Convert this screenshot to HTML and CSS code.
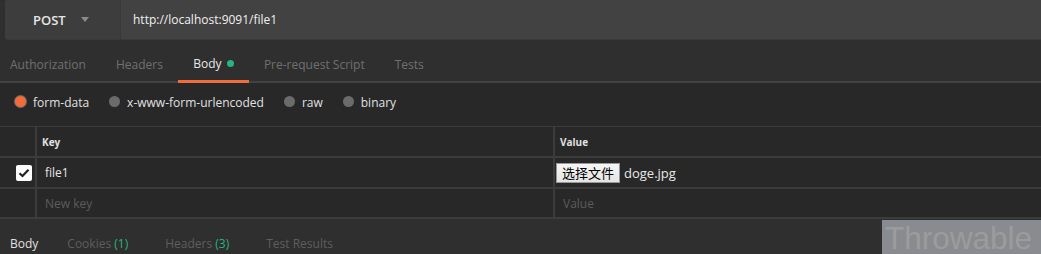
FILE: index.html
```html
<html lang="zh">
<head>
    <meta charset="UTF-8">
    <title>Postman</title>
    <link rel="stylesheet" href="styles.css">
</head>
<body>
    <div class="request-bar">
        <div class="method">POST <span class="caret"></span></div>
        <div class="url">http://localhost:9091/file1</div>
    </div>
    <div class="tabs">
        <span class="tab">Authorization</span>
        <span class="tab">Headers</span>
        <span class="tab active">Body <span class="dot"></span></span>
        <span class="tab">Pre-request Script</span>
        <span class="tab">Tests</span>
    </div>
    <div class="body-panel">
        <div class="radios">
            <label class="radio checked"><span class="circle"></span>form-data</label>
            <label class="radio"><span class="circle"></span>x-www-form-urlencoded</label>
            <label class="radio"><span class="circle"></span>raw</label>
            <label class="radio"><span class="circle"></span>binary</label>
        </div>
        <div class="kv-table">
            <div class="row head">
                <div class="cell check"></div>
                <div class="cell key">Key</div>
                <div class="cell value">Value</div>
            </div>
            <div class="row">
                <div class="cell check">
                    <span class="checkbox">
                        <svg width="12" height="10" viewBox="0 0 12 10"><path d="M1.5 5.2 L4.5 8 L10.5 1.8" fill="none" stroke="#222" stroke-width="2.2"/></svg>
                    </span>
                </div>
                <div class="cell key">file1</div>
                <div class="cell value file"><button class="file-btn" type="button">选择文件</button><span class="file-name">doge.jpg</span></div>
            </div>
            <div class="row">
                <div class="cell check"></div>
                <div class="cell key placeholder">New key</div>
                <div class="cell value placeholder">Value</div>
            </div>
        </div>
    </div>
    <div class="response-tabs">
        <span class="rtab active">Body</span>
        <span class="rtab">Cookies <span class="count">(1)</span></span>
        <span class="rtab">Headers <span class="count">(3)</span></span>
        <span class="rtab">Test Results</span>
    </div>
    <div class="watermark">Throwable</div>
</body>
</html>
```
FILE: styles.css
```css
html {
    height: 254px;
    overflow: hidden;
}
body {
    margin: 0;
    background: #2f2f2f;
    font-family: 'Open Sans', 'Noto Sans', sans-serif;
    font-size: 12px;
    color: #d8d8d8;
    height: 254px;
    overflow: hidden;
    position: relative;
}
.request-bar {
    display: flex;
    height: 39px;
    margin-left: 5px;
    background: #424242;
    border-radius: 3px 0 0 3px;
    border-bottom: 1px solid #3a3a3a;
}
.method {
    width: 116px;
    box-sizing: border-box;
    display: flex;
    align-items: center;
    padding-left: 28px;
    background: #3d3d3d;
    border-right: 1px solid #383838;
    border-radius: 3px 0 0 3px;
    font-weight: 600;
    font-size: 13px;
    color: #e6e6e6;
}
.caret {
    margin-left: 15px;
    width: 0;
    height: 0;
    border-left: 4px solid transparent;
    border-right: 4px solid transparent;
    border-top: 5px solid #8a8a8a;
}
.url {
    display: flex;
    align-items: center;
    padding-left: 12px;
    color: #f0f0f0;
    font-size: 12px;
}
.tabs {
    display: flex;
    height: 43px;
    box-sizing: border-box;
    border-bottom: 2px solid #424242;
}
.tab {
    display: flex;
    align-items: center;
    color: #6f6f6f;
    font-size: 12px;
    padding: 7px 15px 0;
}
.tab:first-child {
    padding-left: 10px;
}
.tab.active {
    color: #e8e8e8;
    width: 71px;
    justify-content: center;
    box-sizing: border-box;
    padding: 7px 0 0;
    border-bottom: 3px solid #f26b3a;
    margin-bottom: -2px;
}
.dot {
    display: inline-block;
    width: 7px;
    height: 7px;
    border-radius: 50%;
    background: #26b47f;
    margin-left: 5px;
}
.body-panel {
    background: #282828;
    padding-top: 4px;
}
.radios {
    display: flex;
    gap: 20px;
    padding-left: 15px;
    height: 30px;
    align-items: center;
    margin-bottom: 9px;
}
.radio {
    display: flex;
    align-items: center;
    color: #e0e0e0;
    font-size: 12px;
}
.circle {
    width: 11px;
    height: 11px;
    border-radius: 50%;
    background: #6b6b6b;
    margin-right: 7px;
    margin-top: -2px;
}
.radio.checked .circle {
    background: #f26b3a;
    box-shadow: 0 0 0 1px #6b6b6b;
}
.kv-table {
    border-top: 1px solid #3c3c3c;
}
.row {
    display: grid;
    grid-template-columns: 35px 518px 1fr;
    height: 31px;
    border-bottom: 2px solid #3c3c3c;
    box-sizing: border-box;
}
.row:last-child {
    height: 30px;
}
.cell {
    display: flex;
    align-items: center;
}
.cell.check {
    justify-content: center;
    padding-left: 13px;
    box-sizing: border-box;
}
.cell.key,
.cell.value {
    border-left: 2px solid #3c3c3c;
    padding-left: 8px;
    color: #e6e6e6;
}
.row.head .cell {
    font-size: 10px;
    font-weight: 700;
    padding-left: 5px;
    color: #e0e0e0;
}
.row.head .cell.check {
    padding-left: 0;
}
.cell.value.file {
    padding-left: 1px;
}
.checkbox {
    width: 16px;
    height: 16px;
    background: #fff;
    border-radius: 2px;
    display: flex;
    align-items: center;
    justify-content: center;
}
.file-btn {
    font-family: 'Noto Sans CJK SC', sans-serif;
    font-size: 13px;
    height: 20px;
    width: 64px;
    padding: 0;
    border: 1px solid #999;
    background: linear-gradient(#f6f6f6, #e4e4e4);
    color: #000;
    line-height: 18px;
}
.file-name {
    margin-left: 4px;
    font-size: 13px;
    color: #e8e8e8;
}
.placeholder {
    color: #5c5c5c !important;
}
.response-tabs {
    display: flex;
    gap: 37px;
    padding-left: 10px;
    height: 36px;
    align-items: center;
    padding-top: 12px;
    box-sizing: border-box;
}
.rtab {
    color: #5e5e5e;
    font-size: 12px;
}
.rtab.active {
    color: #e0e0e0;
    margin-right: -8px;
}
.count {
    color: #26b47f;
}
.watermark {
    position: absolute;
    left: 882px;
    top: 220px;
    width: 159px;
    height: 34px;
    background: #888c90;
    color: #9c9c9c;
    font-family: 'Liberation Sans', Arial, sans-serif;
    font-size: 31.5px;
    line-height: 30px;
    padding: 3px 0 0 3px;
    box-sizing: border-box;
    white-space: nowrap;
}
```
